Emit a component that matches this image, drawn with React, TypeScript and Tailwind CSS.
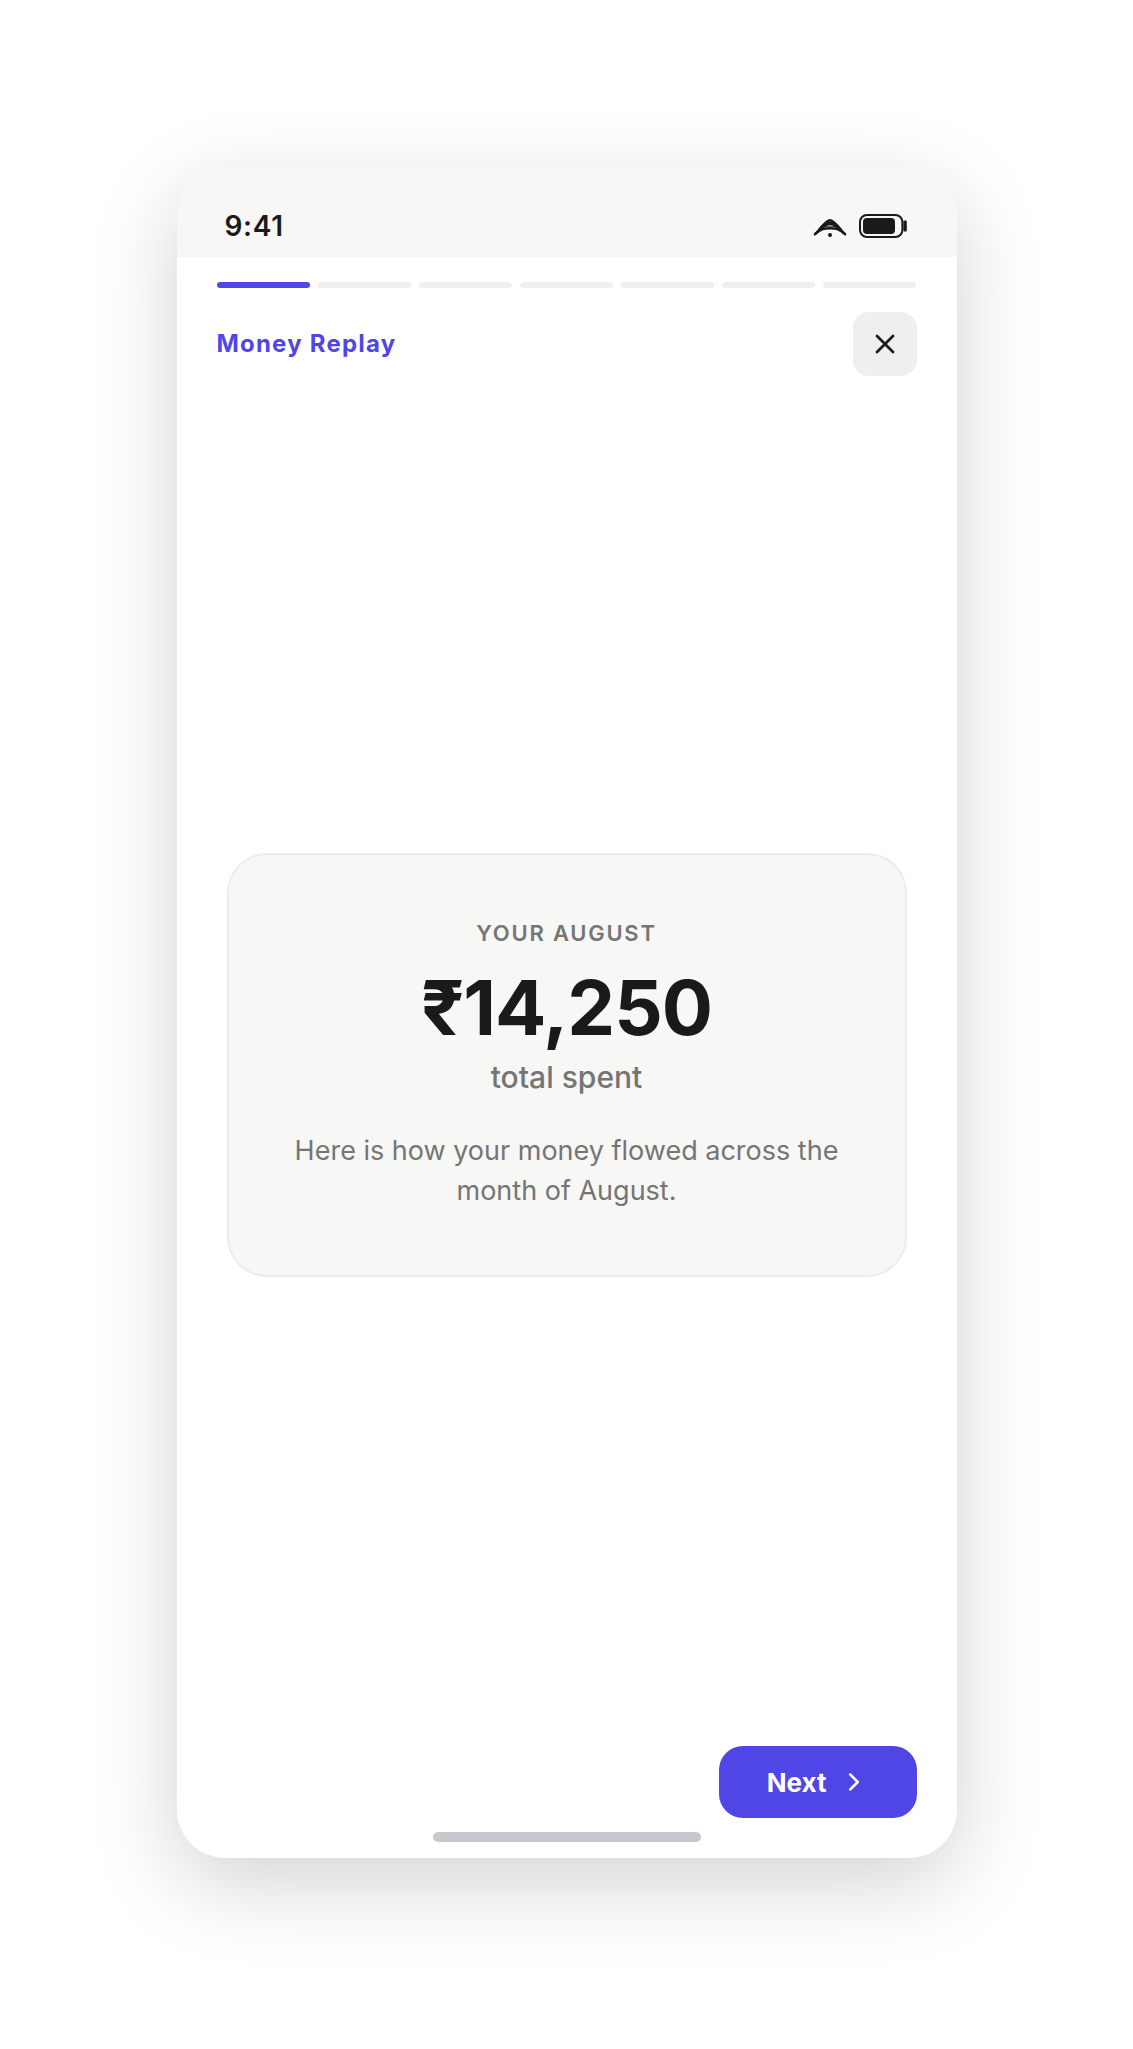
import { ChevronRight, X } from "lucide-react";
import { useState } from "react";

const TOTAL_STEPS = 7;

function WifiIcon() {
  return (
    <svg width="34" height="24" viewBox="0 0 34 24" fill="none" stroke="#1a1a1a" strokeWidth="2.4" strokeLinecap="round" aria-hidden="true">
      <path d="M2 20.2C7 16 12.5 6.2 17 6.2S27 16 32 20.2" />
      <path d="M7 15.5Q17 3 27 15.5" strokeWidth="3.6" />
      <path d="M2 20.2C9 14 13 14.2 17 14.2S25 14 32 20.2" />
      <path d="M10 13Q17 11 24 13" strokeWidth="1.2" />
      <circle cx="17" cy="21" r="2" fill="#1a1a1a" stroke="none" />
    </svg>
  );
}

function BatteryIcon() {
  return (
    <svg width="48" height="24" viewBox="0 0 48 24" fill="none" aria-hidden="true">
      <rect x="1" y="1" width="42.4" height="22" rx="7" stroke="#1a1a1a" strokeWidth="2" />
      <rect x="4" y="4" width="32" height="16" rx="4" fill="#1a1a1a" />
      <rect x="44.4" y="6.4" width="3.4" height="11" rx="1" fill="#1a1a1a" />
    </svg>
  );
}

function StatusBar() {
  return (
    <div className="flex h-[88px] items-center justify-between bg-[#f7f7f5] pt-[26px] pr-[50px] pl-12">
      <span className="text-[28px] leading-8 font-semibold tracking-wide text-[#1a1a1a]">9:41</span>
      <div className="flex items-center gap-3">
        <WifiIcon />
        <BatteryIcon />
      </div>
    </div>
  );
}

function Progress({ step }: { step: number }) {
  return (
    <div className="flex gap-2" role="progressbar" aria-label="Replay progress" aria-valuemin={1} aria-valuemax={TOTAL_STEPS} aria-valuenow={step + 1}>
      {Array.from({ length: TOTAL_STEPS }, (_, i) => (
        <div key={i} className={i <= step ? "h-1.5 flex-1 rounded-full bg-[#5046e5]" : "h-1.5 flex-1 rounded-full bg-[#efefed]"} />
      ))}
    </div>
  );
}

export default function App() {
  const [step, setStep] = useState(0);

  return (
    <div className="flex min-h-screen flex-col items-center bg-white px-4 pt-[169px] pb-[191px] font-[Inter,sans-serif]">
      <div className="flex w-full max-w-[780px] flex-1 flex-col overflow-hidden rounded-[48px] bg-white shadow-[0_24px_88px_rgba(0,0,0,0.18)]">
        <StatusBar />

        <div className="flex flex-1 flex-col px-10 pt-[25px]">
          <Progress step={step} />

          <header className="mt-6 flex items-center justify-between">
            <h1 className="text-2xl font-bold tracking-wider text-[#5046e5]">Money Replay</h1>
            <button
              type="button"
              aria-label="Close"
              onClick={() => setStep(0)}
              className="flex size-16 items-center justify-center rounded-2xl bg-[#efefed] text-[#1a1a1a]"
            >
              <X size={32} strokeWidth={2} />
            </button>
          </header>

          {/* Slide */}
          <main className="flex flex-1 items-center px-2.5 pt-2">
            <section className="w-full rounded-[40px] border-2 border-[#ececea] bg-[#f7f7f5] px-14 py-16 text-center text-[#757575]">
              <h2 className="text-[22px] leading-7 font-semibold tracking-[0.08em]">YOUR AUGUST</h2>
              <p className="mt-4 text-[76px] leading-[88px] font-bold tracking-[-1px] text-[#1a1a1a]">₹14,250</p>
              <p className="mt-2 text-[30px] leading-9 font-medium">total spent</p>
              <p className="mt-9 text-[27px] leading-10">Here is how your money flowed across the month of August.</p>
            </section>
          </main>

          <footer className="flex justify-end">
            <button
              type="button"
              onClick={() => setStep(Math.min(step + 1, TOTAL_STEPS - 1))}
              className="flex h-[72px] items-center gap-3 rounded-3xl bg-[#5046e5] px-12 text-[26px] font-bold text-white"
            >
              Next
              <ChevronRight size={30} strokeWidth={2} />
            </button>
          </footer>
        </div>

        {/* Home indicator */}
        <div className="mt-3.5 mb-4 h-2.5 w-[268px] self-center rounded-full bg-[#c9c8ce]" />
      </div>
    </div>
  );
}
